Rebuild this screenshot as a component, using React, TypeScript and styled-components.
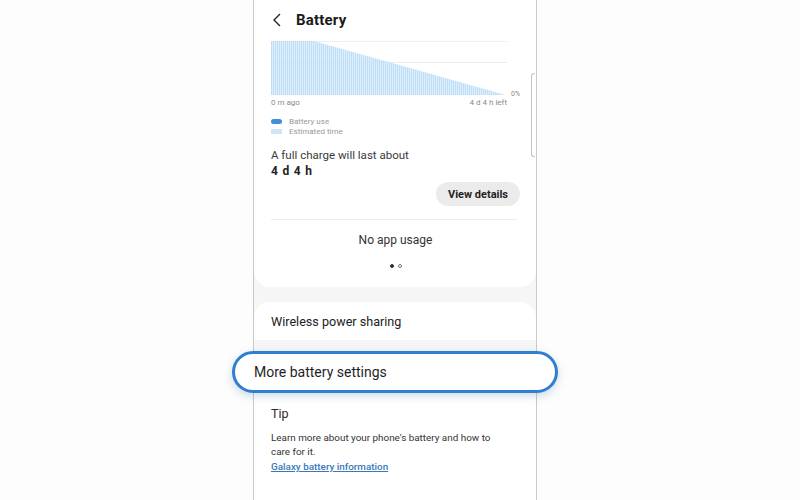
import styled, { createGlobalStyle } from "styled-components";

const GlobalStyle = createGlobalStyle`
  html, body {
    margin: 0;
    padding: 0;
    background: #fdfdfd;
    font-family: Roboto, "Liberation Sans", sans-serif;
  }
`;

const Page = styled.div`
  width: 800px;
  height: 500px;
  overflow: hidden;
  display: flex;
  padding-left: 253px;
  box-sizing: border-box;
`;

const Phone = styled.div`
  position: relative;
  width: 284px;
  height: 500px;
  box-sizing: border-box;
  border-left: 1px solid #c9c9c9;
  border-right: 1px solid #c9c9c9;
  background: #f6f6f6;
  display: flex;
  flex-direction: column;
`;

const Scrollbar = styled.div`
  position: absolute;
  right: 1px;
  top: 73px;
  width: 3px;
  height: 82px;
  border: 1px solid #c4c4c4;
  border-right: none;
  border-radius: 3px 0 0 3px;
`;

const Header = styled.div`
  display: flex;
  align-items: center;
  gap: 14px;
  height: 40px;
  padding: 0 0 0 18px;
  background: #fff;
`;

const Title = styled.h1`
  margin: 0;
  font-size: 15px;
  font-weight: 700;
  color: #1a1a1a;
  letter-spacing: 0.2px;
`;

const Card = styled.div<{ $bottomRound?: boolean }>`
  background: #fff;
  padding: 0 16px 0 17px;
  border-radius: ${(p) => (p.$bottomRound ? "0 0 16px 16px" : "16px")};
`;

const ChartWrap = styled.div`
  position: relative;
  width: 236px;
  height: 54px;
  margin-top: 1px;
`;

const PctLabel = styled.span`
  position: absolute;
  left: 240px;
  bottom: -3px;
  font-size: 7px;
  color: #888;
`;

const AxisRow = styled.div`
  display: flex;
  justify-content: space-between;
  width: 236px;
  margin-top: 3px;
  font-size: 8px;
  color: #8a8a8a;
`;

const Legend = styled.div`
  display: flex;
  flex-direction: column;
  gap: 1px;
  margin-top: 10px;
`;

const LegendItem = styled.div`
  display: flex;
  align-items: center;
  gap: 7px;
  font-size: 8px;
  color: #9a9a9a;
  height: 9px;
`;

const Swatch = styled.span<{ $color: string; $pill?: boolean }>`
  width: 11px;
  height: 5px;
  border-radius: ${(p) => (p.$pill ? "3px" : "0")};
  background: ${(p) => p.$color};
`;

const ChargeText = styled.div`
  margin-top: 12px;
  font-size: 11.5px;
  color: #3a3a3a;
`;

const ChargeValue = styled.div`
  margin-top: 2px;
  font-size: 12px;
  font-weight: 700;
  color: #222;
  letter-spacing: 0.8px;
`;

const ButtonRow = styled.div`
  display: flex;
  justify-content: flex-end;
  margin-top: 4px;
`;

const PillButton = styled.button`
  width: 84px;
  height: 24px;
  border: none;
  border-radius: 12px;
  background: #ebebeb;
  font-family: inherit;
  font-size: 11px;
  font-weight: 700;
  color: #1f1f1f;
  padding: 0;
`;

const Divider = styled.div`
  height: 1px;
  background: #ececec;
  margin-top: 13px;
  margin-right: 3px;
`;

const Empty = styled.div`
  text-align: center;
  margin-top: 13px;
  font-size: 12px;
  color: #333;
`;

const Dots = styled.div`
  display: flex;
  justify-content: center;
  gap: 4px;
  padding: 17px 0 19px;
`;

const Dot = styled.span<{ $active?: boolean }>`
  width: 4px;
  height: 4px;
  border-radius: 50%;
  box-sizing: border-box;
  background: ${(p) => (p.$active ? "#333" : "transparent")};
  border: 1px solid ${(p) => (p.$active ? "#333" : "#777")};
`;

const Gap = styled.div<{ $h: number }>`
  height: ${(p) => p.$h}px;
`;

const RowCard = styled.div`
  background: #fff;
  border-radius: 16px 16px 0 0;
  height: 38px;
  display: flex;
  align-items: center;
  padding: 0 17px;
  font-size: 12.6px;
  color: #222;
`;

const Highlight = styled.div`
  position: relative;
  margin: 0 -22px;
  height: 42px;
  box-sizing: border-box;
  border: 3px solid #2e7fcf;
  border-radius: 21px;
  background: #fff;
  box-shadow: 0 3px 8px rgba(60, 110, 160, 0.25);
  display: flex;
  align-items: center;
  padding-left: 19px;
  font-size: 14px;
  color: #1f1f1f;
`;

const TipCard = styled.div`
  flex: 1;
  background: #fff;
  padding: 13px 17px 0;
`;

const TipTitle = styled.div`
  font-size: 12.5px;
  color: #2a2a2a;
`;

const TipText = styled.p`
  margin: 10px 0 0;
  font-size: 9.9px;
  line-height: 14px;
  color: #333;
`;

const TipLink = styled.a`
  display: block;
  font-size: 9.9px;
  line-height: 15px;
  font-weight: 500;
  color: #3b78b8;
  text-decoration: underline;
`;

function UsageChart() {
  const w = 236;
  const h = 54;
  const flatEnd = 42;
  const bars = [];
  for (let x = 0; x < w - 2; x += 2) {
    const top = x <= flatEnd ? 0 : ((x - flatEnd) / (w - 2 - flatEnd)) * h;
    bars.push(<rect key={x} x={x} y={top} width={1.5} height={h - top} fill="#bfdef8" />);
  }
  return (
    <svg width={w} height={h} viewBox={`0 0 ${w} ${h}`} style={{ display: "block" }}>
      <line x1="0" y1="0.5" x2={w} y2="0.5" stroke="#f0f0f0" />
      <line x1="0" y1="21.5" x2={w} y2="21.5" stroke="#ececec" />
      {bars}
    </svg>
  );
}

export default function App() {
  return (
    <>
      <GlobalStyle />
      <Page>
        <Phone>
          <Header>
            <svg width="10" height="14" viewBox="0 0 10 14">
              <path d="M8 1 L2 7 L8 13" fill="none" stroke="#222" strokeWidth="1.4" />
            </svg>
            <Title>Battery</Title>
          </Header>
          <Card $bottomRound>
            <ChartWrap>
              <UsageChart />
              <PctLabel>0%</PctLabel>
            </ChartWrap>
            <AxisRow>
              <span>0 m ago</span>
              <span>4 d 4 h left</span>
            </AxisRow>
            <Legend>
              <LegendItem>
                <Swatch $color="#3d8edb" $pill />
                Battery use
              </LegendItem>
              <LegendItem>
                <Swatch $color="#cfe6fa" />
                Estimated time
              </LegendItem>
            </Legend>
            <ChargeText>A full charge will last about</ChargeText>
            <ChargeValue>4 d 4 h</ChargeValue>
            <ButtonRow>
              <PillButton>View details</PillButton>
            </ButtonRow>
            <Divider />
            <Empty>No app usage</Empty>
            <Dots>
              <Dot $active />
              <Dot />
            </Dots>
          </Card>
          <Gap $h={15} />
          <RowCard>Wireless power sharing</RowCard>
          <Gap $h={11} />
          <Highlight>More battery settings</Highlight>
          <TipCard>
            <TipTitle>Tip</TipTitle>
            <TipText>
              Learn more about your phone's battery and how to
              <br />
              care for it.
            </TipText>
            <TipLink>Galaxy battery information</TipLink>
          </TipCard>
          <Scrollbar />
        </Phone>
      </Page>
    </>
  );
}
